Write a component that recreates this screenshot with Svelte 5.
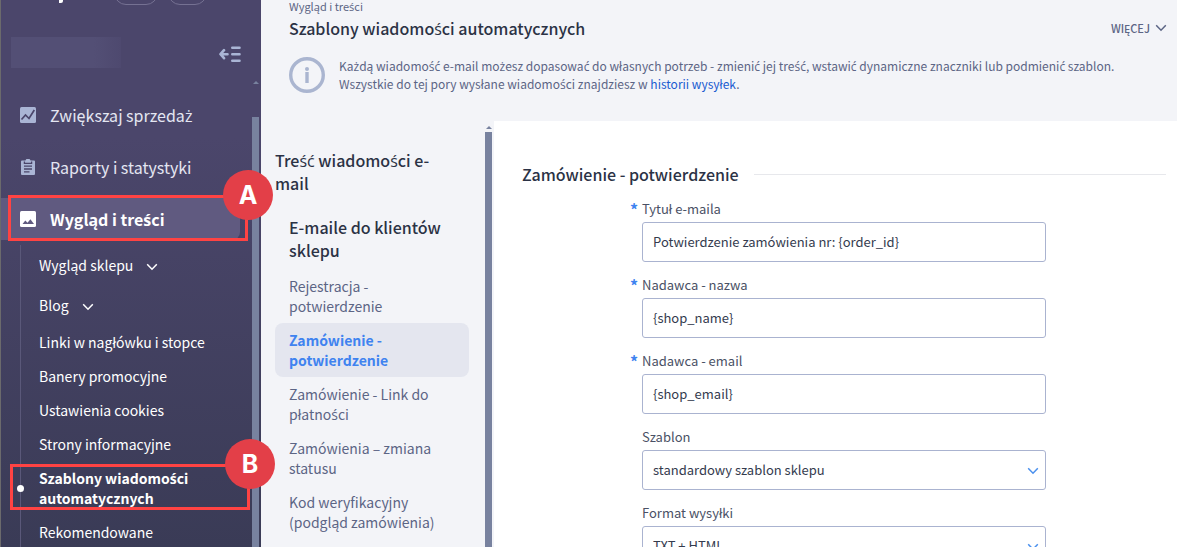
<script lang="ts">
	type SubItem = { label: string; expandable?: boolean; active?: boolean };
	type Field = { id: string; label: string; value: string; required?: boolean; select?: boolean };

	const subItems: SubItem[] = [
		{ label: 'Wygląd sklepu', expandable: true },
		{ label: 'Blog', expandable: true },
		{ label: 'Linki w nagłówku i stopce' },
		{ label: 'Banery promocyjne' },
		{ label: 'Ustawienia cookies' },
		{ label: 'Strony informacyjne' },
		{ label: 'Szablony wiadomości automatycznych', active: true },
		{ label: 'Rekomendowane' }
	];

	const templates = [
		'Rejestracja - potwierdzenie',
		'Zamówienie - potwierdzenie',
		'Zamówienie - Link do płatności',
		'Zamówienia – zmiana statusu',
		'Kod weryfikacyjny (podgląd zamówienia)'
	];

	const fields: Field[] = [
		{ id: 'title', label: 'Tytuł e-maila', value: 'Potwierdzenie zamówienia nr: {order_id}', required: true },
		{ id: 'sender-name', label: 'Nadawca - nazwa', value: '{shop_name}', required: true },
		{ id: 'sender-email', label: 'Nadawca - email', value: '{shop_email}', required: true },
		{ id: 'template', label: 'Szablon', value: 'standardowy szablon sklepu', select: true },
		{ id: 'format', label: 'Format wysyłki', value: 'TXT + HTML', select: true }
	];

	let selected = $state(1);

	const split = (s: string) => s.split(/([śćż]+)/);
</script>

<!-- the main font has no ś, ć, ż of its own, so these come from a second one -->
{#snippet pl(s: string)}<span>{#each split(s) as part, i}{#if i % 2}<span class="alt">{part}</span>{:else}{part}{/if}{/each}</span>{/snippet}

{#snippet chevron()}
	<svg class="chevron" width="12" height="8" viewBox="0 0 12 8" fill="none" stroke="currentColor">
		<path d="M1.2 1.2 6 6.2 10.8 1.2" />
	</svg>
{/snippet}

<div class="app">
	<aside class="sidebar">
		<div class="topbar">
			<span class="logo"></span>
			<span class="pill"></span>
			<span class="pill small"></span>
		</div>

		<div class="account">
			<div class="account-name"></div>
			<button class="collapse" aria-label="Zwiń menu">
				<svg width="22" height="17" viewBox="0 0 22 17" fill="none" stroke="currentColor" stroke-width="2.6" stroke-linecap="round" stroke-linejoin="round">
					<path d="M5 4.2 1.5 8.2 5 12.2M2 8.2h6.5M13.3 1.7h7.2M13.3 8.2h7.2M13.3 14.8h7.2" />
				</svg>
			</button>
		</div>

		<div class="menu-scroll">
			<nav class="menu">
				<a class="item" href="#sprzedaz">
					<svg width="16" height="16" viewBox="0 0 16 16">
						<rect width="16" height="16" rx="1.5" fill="currentColor" />
						<path d="M1.5 12.5 5.5 8l3.5 3.5L14.3 3" fill="none" stroke="#4b466b" stroke-width="1.7" />
					</svg>
					{@render pl('Zwiększaj sprzedaż')}
				</a>
				<a class="item" href="#raporty">
					<svg width="16" height="16" viewBox="0 0 16 16">
						<path d="M2 1.6h3.4a2.7 2.7 0 0 1 5.2 0H14q1 0 1 1V15q0 1-1 1H2q-1 0-1-1V2.6q0-1 1-1z" fill="currentColor" />
						<path d="M4.4 2.5v1.8h7.2V2.5M4 7.2h8M4 10h8M4 12.8h5.5" fill="none" stroke="#4a456a" stroke-width="1.3" />
					</svg>
					Raporty i statystyki
				</a>
				<a class="item current" href="#wyglad">
					<svg width="16" height="16" viewBox="0 0 16 16">
						<rect width="16" height="16" rx="1.5" fill="currentColor" />
						<path d="M2.5 13 5.3 9.5l2.2 2.3 2.9-3.6 3.6 4.8z" fill="#605a80" />
					</svg>
					{@render pl('Wygląd i treści')}
					<span class="mark"><b class="badge">A</b></span>
				</a>

				<ul class="submenu">
					{#each subItems as item}
						<li class:expandable={item.expandable} class:active={item.active}>
							<a href="#menu">{@render pl(item.label)}</a>
							{#if item.expandable}{@render chevron()}{/if}
							{#if item.active}<span class="mark"><b class="badge">B</b></span>{/if}
						</li>
					{/each}
				</ul>
			</nav>
			<div class="track"><i></i><span></span></div>
		</div>
	</aside>

	<main>
		<header>
			<div class="crumb">{@render pl('Wygląd i treści')}</div>
			<div class="title-row">
				<h1>{@render pl('Szablony wiadomości automatycznych')}</h1>
				<button class="more">WIĘCEJ {@render chevron()}</button>
			</div>
			<div class="info">
				<svg width="36" height="36" viewBox="0 0 36 36">
					<circle cx="18" cy="18" r="16.3" fill="none" stroke="#aab5d0" stroke-width="3.4" />
					<path d="M16.3 15h3.4v11h-3.4z" fill="#aab5d0" />
					<circle cx="18" cy="12" r="2" fill="#aab5d0" />
				</svg>
				<p>
					{@render pl('Każdą wiadomość e-mail możesz dopasować do własnych potrzeb - zmienić jej treść, wstawić dynamiczne znaczniki lub podmienić szablon.')}<br />
					{@render pl('Wszystkie do tej pory wysłane wiadomości znajdziesz w')} <a href="#historia">historii wysyłek</a>.
				</p>
			</div>
		</header>

		<div class="columns">
			<div class="templates">
				<nav>
					<h2>{@render pl('Treść wiadomości e-mail')}</h2>
					<h3>E-maile do klientów sklepu</h3>
					{#each templates as name, i}
						<button class:selected={selected === i} onclick={() => (selected = i)}>{@render pl(name)}</button>
					{/each}
				</nav>
				<div class="track"><i></i><span></span></div>
			</div>

			<form>
				<div class="legend">
					<h2>Zamówienie - potwierdzenie</h2>
					<hr />
				</div>
				<div class="fields">
					{#each fields as field}
						<div class="field">
							<label for={field.id} class:required={field.required}>{field.label}</label>
							{#if field.select}
								<div class="select">
									<select id={field.id}>
										<option>{field.value}</option>
									</select>
									{@render chevron()}
								</div>
							{:else}
								<input id={field.id} type="text" value={field.value} />
							{/if}
						</div>
					{/each}
				</div>
			</form>
		</div>
	</main>
</div>

<style>
	:global(body) {
		margin: 0;
		overflow: hidden;
	}

	* {
		box-sizing: border-box;
	}

	.app {
		display: flex;
		height: 100vh;
		overflow: hidden;
		background: #f3f4f8;
		color: #5c6585;
		font-family: 'Noto Sans CJK SC', 'Noto Sans', sans-serif;
		font-size: 13px;
	}

	.alt {
		font-family: 'Open Sans', sans-serif;
		line-height: 0;
	}

	a {
		color: inherit;
		text-decoration: none;
	}

	button,
	input,
	select {
		font: inherit;
		color: inherit;
	}

	button {
		border: 0;
		padding: 0;
		background: none;
		cursor: pointer;
	}

	h1,
	h2,
	h3,
	p,
	ul {
		margin: 0;
		padding: 0;
	}

	h1,
	h2,
	h3 {
		color: #2b3245;
		font-size: 16px;
		font-weight: 500;
		line-height: 23px;
	}

	svg {
		flex: none;
	}

	/* sidebar */
	.sidebar {
		flex: none;
		display: flex;
		flex-direction: column;
		width: 261px;
		border-left: 1px solid #6b6a6c;
		background: linear-gradient(#4b466b 25%, #3a3b56);
		color: #fff;
	}

	.topbar {
		display: flex;
		height: 5px;
		padding-left: 58px;
		overflow: hidden;
	}

	.logo {
		width: 4px;
		height: 3px;
		margin-right: 51px;
		background: #fff;
		border-radius: 0 0 2px 0;
	}

	.pill {
		flex: none;
		align-self: flex-end;
		width: 44px;
		height: 24px;
		margin-right: 10px;
		border: 1px solid #757192;
		border-radius: 12px;
	}

	.pill.small {
		width: 39px;
	}

	.account {
		display: flex;
		justify-content: space-between;
		align-items: flex-end;
		padding: 32px 20px 0 10px;
	}

	.account-name {
		width: 110px;
		height: 31px;
		background: linear-gradient(90deg, #534f75 75%, #4e496f);
	}

	.collapse {
		display: flex;
		padding-bottom: 5px;
		color: #aab5d5;
	}

	.menu-scroll {
		flex: 1;
		display: flex;
		min-height: 0;
		margin-top: 13px;
	}

	.menu {
		flex: 1;
		padding-top: 13px;
	}

	.item {
		position: relative;
		display: flex;
		align-items: center;
		gap: 14px;
		height: 42px;
		margin: 0 12px 10px 0;
		padding-left: 19px;
		color: #e4e6f2;
		font-size: 16px;
		line-height: 24px;
		border-radius: 0 8px 8px 0;
	}

	.item svg {
		color: #aab5d5;
	}

	.item.current {
		margin-bottom: 5px;
		background: #605a80;
		color: #fff;
		font-weight: 700;
	}

	.item.current svg {
		color: #fff;
	}

	/* callout frames drawn over the menu */
	.mark {
		position: absolute;
		inset: -3px -8px -1px 7px;
		z-index: 2;
		border: 3px solid #ff4343;
		pointer-events: none;
	}

	.badge {
		position: absolute;
		top: -28px;
		right: -28px;
		width: 50px;
		height: 50px;
		border-radius: 50%;
		background: #e33f48;
		color: #fff;
		font: 700 25px/50px Inter, sans-serif;
		text-align: center;
	}

	.submenu {
		position: relative;
		list-style: none;
		margin: 0 3px 0 19px;
		border-left: 1px solid #5a5879;
		font-size: 14px;
		line-height: 20px;
	}

	.submenu li {
		position: relative;
		display: flex;
		align-items: center;
		gap: 13px;
		padding: 7px 20px 7px 18px;
	}

	.submenu .expandable {
		height: 40px;
	}

	.submenu .chevron {
		margin-top: 3px;
	}

	.submenu .active {
		font-weight: 700;
	}

	.submenu .active::before {
		content: '';
		position: absolute;
		left: -4px;
		width: 7px;
		height: 7px;
		border-radius: 50%;
		background: #fff;
	}

	.submenu .mark {
		inset: 3px -1px 5px -11px;
	}

	.chevron {
		stroke-width: 1.5;
	}

	.track {
		flex: none;
		display: flex;
		flex-direction: column;
		align-items: center;
		width: 7px;
		margin-right: 2px;
	}

	.track i {
		flex: none;
		border: 3px solid transparent;
		border-top: 0;
		border-bottom-color: #78829f;
	}

	.track span {
		flex: 1;
		width: 7px;
		background: #78829f;
	}

	.sidebar .track i {
		margin-bottom: 33px;
	}

	/* header */
	main {
		flex: 1;
		display: flex;
		flex-direction: column;
		min-width: 0;
	}

	header {
		height: 121px;
		padding: 0 10px 0 28px;
	}

	.crumb {
		font-size: 11px;
		line-height: 12px;
	}

	.title-row {
		display: flex;
		justify-content: space-between;
		align-items: center;
		height: 32px;
	}

	.more {
		display: flex;
		align-items: center;
		gap: 5px;
		font-size: 11px;
		font-weight: 500;
	}

	.info {
		display: flex;
		align-items: center;
		gap: 14px;
		margin-top: 13px;
	}

	.info p {
		font-size: 12px;
		line-height: 18px;
	}

	.info a {
		color: #1a5bd0;
	}

	/* template list */
	.columns {
		flex: 1;
		display: flex;
		min-height: 0;
	}

	.templates {
		flex: none;
		display: flex;
		width: 233px;
	}

	.templates nav {
		flex: 1;
		padding: 28px 16px 0 14px;
	}

	.templates h2 {
		padding-right: 14px;
	}

	.templates h3 {
		padding: 21px 14px 7px;
	}

	.templates button {
		display: block;
		width: 100%;
		padding: 7px 14px;
		border-radius: 8px;
		font-size: 14px;
		line-height: 20px;
		text-align: left;
	}

	.templates .selected {
		background: #e4e6ef;
		color: #3f83f0;
		font-weight: 700;
	}

	.templates .track {
		padding-top: 5px;
	}

	.templates .track i {
		margin-bottom: 3px;
	}

	/* form */
	form {
		flex: 1;
		padding: 41px 11px 0 28px;
		background: #fff;
		color: #4a5165;
	}

	.legend {
		display: flex;
		align-items: center;
		gap: 15px;
		height: 24px;
	}

	hr {
		flex: 1;
		margin: 0;
		border: 0;
		border-top: 1px solid #e7e8ec;
	}

	.fields {
		display: grid;
		grid-template-columns: minmax(0, 404px);
		justify-content: center;
		gap: 14px;
		padding-top: 14px;
	}

	label {
		position: relative;
		display: block;
		height: 22px;
		line-height: 18px;
	}

	.required::before {
		content: '*';
		position: absolute;
		left: -12px;
		color: #3f83f0;
		font-size: 16px;
		font-weight: 700;
	}

	input,
	select {
		display: block;
		width: 100%;
		height: 40px;
		padding: 0 10px 1px;
		border: 1px solid #aab3d0;
		border-radius: 3px;
		background: #fff;
		color: #343b4e;
		appearance: none;
	}

	.select {
		position: relative;
	}

	.select .chevron {
		position: absolute;
		right: 7px;
		top: 17px;
		color: #4a90ee;
		pointer-events: none;
	}
</style>
